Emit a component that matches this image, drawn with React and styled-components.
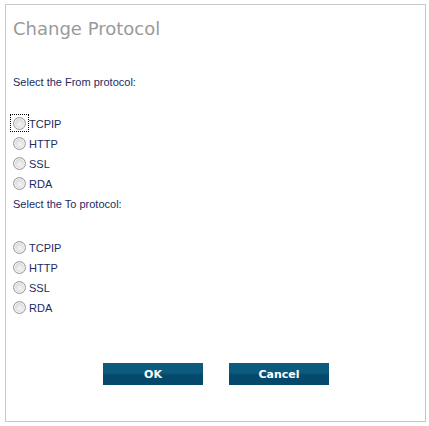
import React from 'react';
import styled, { createGlobalStyle } from 'styled-components';

const GlobalStyle = createGlobalStyle`
  html, body {
    margin: 0;
    padding: 0;
    background: #ffffff;
  }
  body {
    font-family: "DejaVu Sans", Verdana, sans-serif;
  }
`;

const Dialog = styled.div`
  box-sizing: border-box;
  margin: 4px 0 0 5px;
  width: 421px;
  height: 418px;
  border: 1px solid #c8c8c8;
  padding: 13px 0 0 7px;
  display: flex;
  flex-direction: column;
`;

const Title = styled.h1`
  margin: 0;
  font-family: "DejaVu Sans", Verdana, sans-serif;
  font-weight: normal;
  font-size: 18px;
  line-height: 22px;
  color: #9a9a9a;
`;

const Prompt = styled.div`
  font-family: "Liberation Sans", Arial, sans-serif;
  font-size: 11px;
  line-height: 14px;
  color: #1c2a63;
  margin-top: ${(p) => p.$top}px;
`;

const OptionList = styled.div`
  display: flex;
  flex-direction: column;
  gap: 7px;
  margin-top: ${(p) => p.$top}px;
`;

const Option = styled.label`
  display: flex;
  align-items: center;
  height: 13px;
  font-family: "Liberation Sans", Arial, sans-serif;
  font-size: 11px;
  color: #1c2a63;
  cursor: pointer;
`;

const RadioWrap = styled.span`
  position: relative;
  display: inline-flex;
  margin: 0 3px 0 0;
  ${(p) =>
    p.$focused &&
    `
    &::after {
      content: '';
      position: absolute;
      left: -3px;
      top: -3px;
      width: 17px;
      height: 16px;
      border: 1px dotted #000;
    }
  `}
`;

const Radio = styled.span`
  box-sizing: border-box;
  width: 13px;
  height: 13px;
  border-radius: 50%;
  border: 1px solid #9c9c9c;
  background: radial-gradient(circle at 55% 60%, #f4f4f4 0%, #e2e2e2 45%, #c9c9c9 100%);
  box-shadow: inset 0 0 0 1px #f0f0f0;
`;

const Buttons = styled.div`
  display: flex;
  gap: 26px;
  margin: auto 0 36px 90px;
`;

const Button = styled.button`
  width: 100px;
  height: 22px;
  border: none;
  padding: 0;
  background: linear-gradient(to bottom, #0c5b7f 0%, #0c5b7f 45%, #04496b 55%, #04496b 100%);
  color: #ffffff;
  font-family: "DejaVu Sans", Verdana, sans-serif;
  font-weight: bold;
  font-size: 11px;
  cursor: pointer;
`;

const protocols = ['TCPIP', 'HTTP', 'SSL', 'RDA'];

function ProtocolGroup({ top, focusFirst }) {
  return (
    <OptionList $top={top}>
      {protocols.map((p, i) => (
        <Option key={p}>
          <RadioWrap $focused={focusFirst && i === 0}>
            <Radio />
          </RadioWrap>
          {p}
        </Option>
      ))}
    </OptionList>
  );
}

export default function App() {
  return (
    <>
      <GlobalStyle />
      <Dialog>
        <Title>Change Protocol</Title>
        <Prompt $top={35}>Select the From protocol:</Prompt>
        <ProtocolGroup top={28} focusFirst />
        <Prompt $top={7}>Select the To protocol:</Prompt>
        <ProtocolGroup top={30} />
        <Buttons>
          <Button>OK</Button>
          <Button>Cancel</Button>
        </Buttons>
      </Dialog>
    </>
  );
}
